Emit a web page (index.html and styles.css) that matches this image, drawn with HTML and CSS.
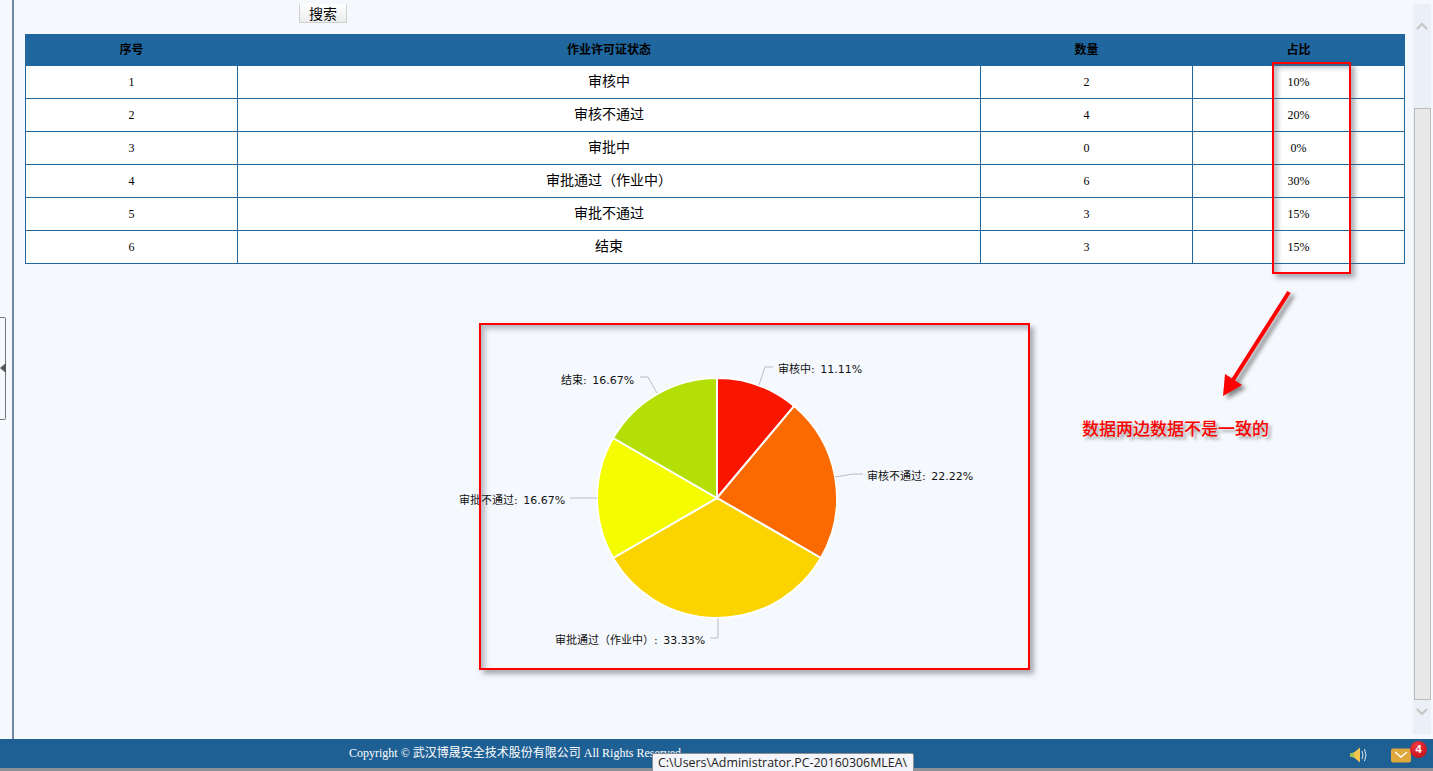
FILE: index.html
```html
<!DOCTYPE html>
<html lang="en">
<head>
    <meta charset="UTF-8">
    <meta name="viewport" content="width=device-width, initial-scale=1.0">
    <title>作业许可证状态统计</title>
    <link rel="stylesheet" href="styles.css">
</head>
<body>
    <div class="page">
        <div class="main">
            <div class="rail">
                <div class="rail-handle"><span class="rail-arrow"></span></div>
            </div>
            <div class="content">
                <div class="search-row">
                    <button class="search-btn" type="button">搜索</button>
                </div>
                <table class="stats">
                    <colgroup>
                        <col class="col-a"><col class="col-b"><col class="col-c"><col class="col-d">
                    </colgroup>
                    <thead>
                        <tr><th>序号</th><th>作业许可证状态</th><th>数量</th><th>占比</th></tr>
                    </thead>
                    <tbody>
                        <tr><td class="num">1</td><td class="name">审核中</td><td class="num">2</td><td class="num">10%</td></tr>
                        <tr><td class="num">2</td><td class="name">审核不通过</td><td class="num">4</td><td class="num">20%</td></tr>
                        <tr><td class="num">3</td><td class="name">审批中</td><td class="num">0</td><td class="num">0%</td></tr>
                        <tr><td class="num">4</td><td class="name">审批通过（作业中）</td><td class="num">6</td><td class="num">30%</td></tr>
                        <tr><td class="num">5</td><td class="name">审批不通过</td><td class="num">3</td><td class="num">15%</td></tr>
                        <tr><td class="num">6</td><td class="name">结束</td><td class="num">3</td><td class="num">15%</td></tr>
                    </tbody>
                </table>
                <div class="chart-wrap">
                    <!-- viewBox uses page coordinates, chart starts at 440,340 -->
                    <svg class="pie" width="560" height="320" viewBox="440 340 560 320">
                        <g stroke="#fff" stroke-width="2" stroke-linejoin="round">
                            <path fill="#f91500" d="M717 498V378A120 120 0 0 1 794.1 406.1Z"/>
                            <path fill="#fb6a00" d="M717 498L794.1 406.1A120 120 0 0 1 820.9 558Z"/>
                            <path fill="#fbd400" d="M717 498L820.9 558A120 120 0 0 1 613.1 558Z"/>
                            <path fill="#f6fc00" d="M717 498L613.1 558A120 120 0 0 1 613.1 438Z"/>
                            <path fill="#b3df06" d="M717 498L613.1 438A120 120 0 0 1 717 378Z"/>
                        </g>
                        <g class="leaders">
                            <polyline points="759,385 765,367 773,367"/>
                            <polyline points="835,477 853,474 863,474"/>
                            <polyline points="718,618 718,638 710,638"/>
                            <polyline points="597,498 570,498"/>
                            <polyline points="657,393 648,377 640,377"/>
                        </g>
                        <g class="labels">
                            <text x="778" y="373"><tspan class="zh">审核中</tspan>: 11.11%</text>
                            <text x="867" y="480"><tspan class="zh">审核不通过</tspan>: 22.22%</text>
                            <text x="555" y="644"><tspan class="zh">审批通过（作业中）</tspan>: 33.33%</text>
                            <text x="459" y="504"><tspan class="zh">审批不通过</tspan>: 16.67%</text>
                            <text x="561" y="384"><tspan class="zh">结束</tspan>: 16.67%</text>
                        </g>
                    </svg>
                </div>
            </div>
            <div class="scrollbar">
                <svg class="chev chev-up" width="14" height="10" viewBox="0 0 14 10"><path d="M2 8L7 3l5 5" /></svg>
                <div class="thumb"></div>
                <svg class="chev chev-down" width="14" height="10" viewBox="0 0 14 10"><path d="M2 2l5 5 5-5" /></svg>
            </div>
        </div>
        <div class="footer">
            <span class="copyright">Copyright © 武汉博晟安全技术股份有限公司 All Rights Reserved</span>
            <div class="footer-icons">
                <svg class="speaker" width="20" height="18" viewBox="0 0 20 18">
                    <path fill="#f2c64f" d="M1 7.500l4-1L11 1.500v15l-6-5-4-1z"/>
                    <path fill="#9fc05a" d="M1 7.500l4-1v5l-4-1z"/>
                    <path fill="none" stroke="#dfeaf3" d="M13 5q2 4 0 8M15.500 3q3 6 0 12"/>
                </svg>
                <div class="mail">
                    <svg width="20" height="15" viewBox="0 0 20 15">
                        <rect width="20" height="14" y="0.500" rx="2" fill="#dfa83c"/>
                        <path fill="none" stroke="#fff" stroke-width="1.500" d="M4 4l6 5 6-5"/>
                    </svg>
                    <span class="badge">4</span>
                </div>
            </div>
        </div>
        <div class="tooltip">C:\Users\Administrator.PC-20160306MLEA\</div>
        <div class="mark mark-table"></div>
        <div class="mark mark-chart"></div>
        <svg class="arrow" width="80" height="112" viewBox="1218 288 80 112">
            <path fill="none" stroke="#f00" stroke-width="4" d="M1289 292L1233 380"/>
            <path fill="#f00" d="M1223 396L1225 374L1242 385Z"/>
        </svg>
        <div class="note">数据两边数据不是一致的</div>
    </div>
</body>
</html>
```

FILE: styles.css
```css
html, body {
    margin: 0;
    padding: 0;
    overflow: hidden;
}
body {
    background-color: #f5f8fd;
    font-family: "Liberation Serif", "Noto Sans CJK SC", serif;
    color: #000;
}
.page {
    position: relative;
    width: 1433px;
    height: 771px;
    display: flex;
    flex-direction: column;
    overflow: hidden;
}
.main {
    flex: 1;
    display: flex;
    min-height: 0;
}

/* left rail */
.rail {
    width: 12px;
    border-right: 2px solid #6d89a4;
    display: flex;
    align-items: center;
    flex-shrink: 0;
}
.rail-handle {
    width: 5px;
    height: 101px;
    margin-bottom: 3px;
    border: 1px solid #777;
    border-left: none;
    border-radius: 0 2px 2px 0;
    display: flex;
    align-items: center;
}
.rail-arrow {
    width: 0;
    height: 0;
    border-top: 5px solid transparent;
    border-bottom: 5px solid transparent;
    border-right: 6px solid #555;
}

/* table area */
.content {
    flex: 1;
    padding: 0 8px 0 11px;
    min-width: 0;
}
.search-row {
    box-sizing: border-box;
    height: 34px;
    padding: 4px 0 0 274px;
}
.search-btn {
    display: block;
    width: 48px;
    height: 19px;
    padding: 0;
    border: 1px solid #d0d0d0;
    border-top: none;
    background: linear-gradient(#fff, #ececec);
    font-family: "Noto Sans CJK SC", sans-serif;
    font-size: 14px;
    line-height: 19px;
    color: #000;
}
.stats {
    width: 1379px;
    border-collapse: collapse;
    table-layout: fixed;
    background: #fff;
}
.col-a { width: 212px; }
.col-b { width: 743px; }
.col-c { width: 212px; }
.col-d { width: 212px; }
.stats th {
    height: 26px;
    padding: 0 0 4px;
    background: #20669f;
    border: 1px solid #20669f;
    font-family: "Noto Sans CJK SC", sans-serif;
    font-size: 12px;
    font-weight: 700;
    color: #000;
}
.stats td {
    height: 32px;
    padding: 0;
    border: 1px solid #20669f;
    text-align: center;
}
.stats .num {
    font-family: "Liberation Serif", serif;
    font-size: 12px;
}
.stats .name {
    height: 27px;
    padding-bottom: 5px;
    font-family: "Noto Sans CJK SC", sans-serif;
    font-size: 14px;
}

/* pie chart */
.chart-wrap {
    margin: 76px 0 0 415px;
}
.pie {
    display: block;
}
.leaders polyline {
    fill: none;
    stroke: #b9bdc4;
    stroke-width: 1;
}
.labels text {
    font-family: "DejaVu Sans", sans-serif;
    font-size: 11px;
    word-spacing: 2px;
    fill: #111;
}
.labels .zh {
    font-family: "Noto Sans CJK SC", sans-serif;
    font-size: 11px;
}

/* scrollbar */
.scrollbar {
    width: 18px;
    margin: 4px 2px 5px 0;
    background: #ebeff7;
    display: flex;
    flex-direction: column;
    align-items: flex-end;
    flex-shrink: 0;
}
.chev {
    flex-shrink: 0;
    margin-right: 2px;
}
.chev-up {
    margin-top: 17px;
}
.chev-down {
    margin-top: 7px;
}
.chev path {
    fill: none;
    stroke: #c4c4c4;
    stroke-width: 2;
}
.thumb {
    box-sizing: border-box;
    height: 592px;
    width: 17px;
    margin-top: 77px;
    background: #e8e8e8;
    border: 1px solid #bcbcbc;
}

/* footer */
.footer {
    box-sizing: border-box;
    height: 32px;
    background: #1f6094;
    border-bottom: 3px solid #8c9298;
    display: flex;
    align-items: center;
    justify-content: space-between;
    padding: 0 22px 3px 349px;
    color: #fff;
    font-size: 12px;
}
.footer-icons {
    display: flex;
    align-items: center;
    gap: 22px;
}
.speaker {
    margin-top: 5px;
}
.mail {
    position: relative;
    height: 15px;
    margin-top: 6px;
}
.mail svg {
    display: block;
}
.badge {
    position: absolute;
    top: -7px;
    left: 19px;
    width: 17px;
    height: 17px;
    border-radius: 50%;
    background: radial-gradient(circle at 40% 30%, #ee3a42, #b8060f);
    font-family: "Liberation Sans", sans-serif;
    font-size: 11px;
    font-weight: 700;
    line-height: 17px;
    text-align: center;
}
.tooltip {
    position: absolute;
    left: 652px;
    top: 753px;
    width: 262px;
    height: 21px;
    box-sizing: border-box;
    padding: 1px 0 0 5px;
    background: #f4f5fa;
    border: 1px solid #8e8e8e;
    border-radius: 2px;
    font-family: "Open Sans", sans-serif;
    font-size: 12.4px;
    line-height: 16px;
    color: #222;
    white-space: nowrap;
}

/* red annotations drawn over the screenshot */
.mark {
    position: absolute;
    box-sizing: border-box;
    border: 2px solid #f00;
    box-shadow: 4px 4px 5px rgba(90, 95, 110, .5), inset 4px 4px 5px rgba(90, 95, 110, .4);
}
.mark-table {
    left: 1272px;
    top: 62px;
    width: 79px;
    height: 212px;
}
.mark-chart {
    left: 479px;
    top: 323px;
    width: 551px;
    height: 347px;
}
.arrow {
    position: absolute;
    left: 1218px;
    top: 288px;
    overflow: visible;
    filter: drop-shadow(4px 3px 2px rgba(70, 70, 70, .65));
}
.note {
    position: absolute;
    left: 1082px;
    top: 415px;
    font-family: "Noto Sans CJK SC", sans-serif;
    font-size: 17px;
    font-weight: 500;
    line-height: 26px;
    color: #f00;
    white-space: nowrap;
    text-shadow: 3px 3px 3px rgba(80, 80, 80, .5);
}
```
